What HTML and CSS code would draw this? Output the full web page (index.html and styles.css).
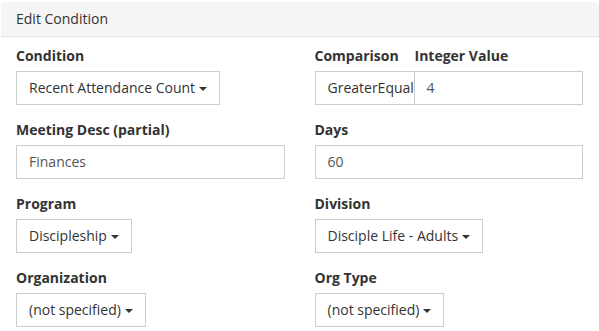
FILE: index.html
```html
<!DOCTYPE html>
<html>
<head>
<meta charset="utf-8">
<link rel="stylesheet" href="styles.css">
</head>
<body>
<div class="panel">
  <div class="panel-heading">Edit Condition</div>
  <div class="panel-body">
    <div class="grid">
      <div class="form-group">
        <label class="lbl">Condition</label>
        <div><span class="btn">Recent Attendance Count <span class="caret"></span></span></div>
      </div>
      <div class="form-group split">
        <div class="cmp">
          <label class="lbl">Comparison</label>
          <div class="btn cmp-btn">GreaterEqual</div>
        </div>
        <div class="intval">
          <label class="lbl">Integer Value</label>
          <div class="input input-join">4</div>
        </div>
      </div>

      <div class="form-group">
        <label class="lbl">Meeting Desc (partial)</label>
        <div class="input">Finances</div>
      </div>
      <div class="form-group">
        <label class="lbl">Days</label>
        <div class="input">60</div>
      </div>

      <div class="form-group">
        <label class="lbl">Program</label>
        <div><span class="btn">Discipleship <span class="caret"></span></span></div>
      </div>
      <div class="form-group">
        <label class="lbl">Division</label>
        <div><span class="btn">Disciple Life - Adults <span class="caret"></span></span></div>
      </div>

      <div class="form-group">
        <label class="lbl">Organization</label>
        <div><span class="btn">(not specified) <span class="caret"></span></span></div>
      </div>
      <div class="form-group">
        <label class="lbl">Org Type</label>
        <div><span class="btn">(not specified) <span class="caret"></span></span></div>
      </div>
    </div>
  </div>
</div>
</body>
</html>
```

FILE: styles.css
```css
* { box-sizing: border-box; }
html, body { margin: 0; padding: 0; background: #fff; }
body {
  font-family: "Open Sans", "Liberation Sans", sans-serif;
  font-size: 14px;
  line-height: 20px;
  color: #333;
}
.panel {
  background: #fff;
}
.panel-heading {
  margin-top: 2px;
  margin-left: 1px;
  height: 35px;
  padding: 7px 15px 0 15px;
  background: #f5f5f5;
  border-bottom: 1px solid #e3e3e3;
  border-top-right-radius: 5px;
  color: #333;
}
.panel-body {
  padding: 9px 16px 0 16px;
}
.grid {
  display: grid;
  grid-template-columns: 1fr 1fr;
  column-gap: 30px;
}
.form-group {
  margin-bottom: 15px;
}
.lbl {
  display: block;
  font-weight: 700;
  margin-bottom: 5px;
  line-height: 20px;
}
.btn {
  display: inline-block;
  height: 34px;
  padding: 6px 12px;
  border: 1px solid #ccc;
  background: #fff;
  color: #333;
  white-space: nowrap;
}
.caret {
  display: inline-block;
  width: 0;
  height: 0;
  margin-left: 0;
  vertical-align: middle;
  border-top: 4px solid #333;
  border-left: 4px solid transparent;
  border-right: 4px solid transparent;
}
.input {
  display: block;
  height: 34px;
  padding: 6px 12px;
  border: 1px solid #ccc;
  color: #555;
}
.split {
  display: flex;
}
.cmp {
  width: 100px;
  flex: none;
}
.cmp-btn {
  display: block;
  width: 100px;
  overflow: hidden;
  padding-right: 0;
}
.intval {
  flex: 1;
}
.input-join {
  border-left: 1px solid #ccc;
  margin-left: -1px;
}
```
